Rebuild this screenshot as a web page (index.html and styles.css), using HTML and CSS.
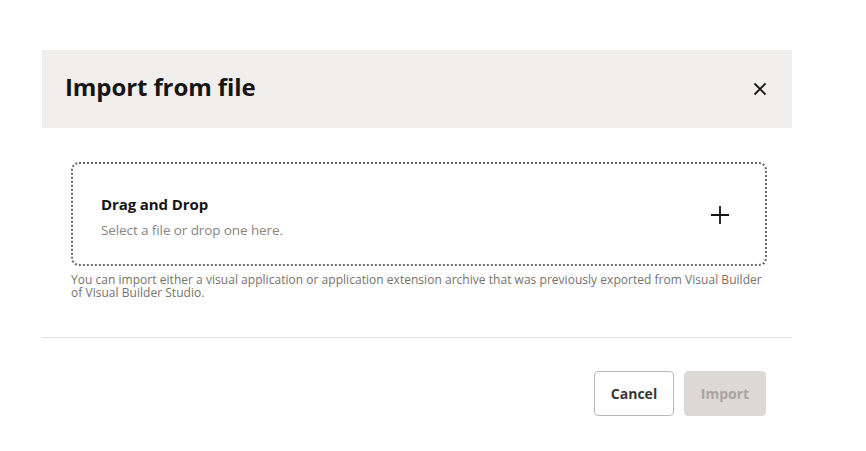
FILE: index.html
```html
<!DOCTYPE html>
<html>
<head>
<meta charset="utf-8">
<link rel="stylesheet" href="styles.css">
</head>
<body>
<div class="dialog">
  <div class="dialog-header">
    <h1 class="title">Import from file</h1>
    <button class="close" aria-label="Close">
      <svg width="14" height="14" viewBox="0 0 14 14"><path d="M1.5 1.5 L12.5 12.5 M12.5 1.5 L1.5 12.5" stroke="#161513" stroke-width="1.8" fill="none"/></svg>
    </button>
  </div>
  <div class="dialog-body">
    <div class="dropzone">
      <div class="dz-text">
        <div class="dz-title">Drag and Drop</div>
        <div class="dz-sub">Select a file or drop one here.</div>
      </div>
      <svg class="plus" width="20" height="20" viewBox="0 0 20 20"><path d="M10 1 V19 M1 10 H19" stroke="#161513" stroke-width="1.8" fill="none"/></svg>
    </div>
    <p class="help">You can import either a visual application or application extension archive that was previously exported from Visual Builder of Visual Builder Studio.</p>
  </div>
  <div class="dialog-footer">
    <button class="btn btn-cancel">Cancel</button>
    <button class="btn btn-import" disabled>Import</button>
  </div>
</div>
</body>
</html>
```
FILE: styles.css
```css
html, body {
  margin: 0;
  padding: 0;
  background: #ffffff;
}
body {
  font-family: "Open Sans", "Noto Sans", sans-serif;
  color: #161513;
}
.dialog {
  width: 750px;
  margin: 50px 0 0 42px;
}
.dialog-header {
  height: 78px;
  background: #f1efed;
  display: flex;
  align-items: center;
  justify-content: space-between;
  padding: 0 22px 0 23px;
}
.title {
  margin: 0;
  font-size: 24px;
  font-weight: 700;
  letter-spacing: -0.1px;
  color: #161513;
  padding-bottom: 6px;
}
.close {
  border: 0;
  background: transparent;
  padding: 0;
  width: 30px;
  height: 30px;
  display: flex;
  align-items: center;
  justify-content: center;
  margin-right: -5px;
}
.dialog-body {
  padding: 34px 25px 38px 29px;
  border-bottom: 1px solid #e4dfdb;
}
.dropzone {
  height: 104px;
  box-sizing: border-box;
  border: 2px dotted #6d6966;
  border-radius: 8px;
  display: flex;
  align-items: center;
  justify-content: space-between;
  padding: 0 35px 0 28px;
}
.dz-text {
  padding-top: 4px;
}
.dz-title {
  font-size: 15px;
  font-weight: 700;
  color: #161513;
  line-height: 20px;
  letter-spacing: -0.1px;
}
.dz-sub {
  font-size: 13.5px;
  color: #8a8682;
  line-height: 18px;
  margin-top: 7px;
  letter-spacing: -0.1px;
}
.plus {
  margin-top: 2px;
}
.help {
  margin: 7px 0 0 0;
  font-size: 12px;
  line-height: 13px;
  color: #77726e;
  letter-spacing: 0.03px;
}
.dialog-footer {
  display: flex;
  justify-content: flex-end;
  gap: 10px;
  padding: 33px 26px 0 0;
}
.btn {
  height: 45px;
  border-radius: 4px;
  font-family: "Open Sans", "Noto Sans", sans-serif;
  font-size: 14px;
  font-weight: 700;
  padding: 0;
}
.btn-cancel {
  width: 80px;
  background: #ffffff;
  border: 1px solid #bdb8b4;
  color: #3a3632;
}
.btn-import {
  width: 82px;
  background: #dcd8d4;
  border: 1px solid #dcd8d4;
  color: #a9a4a0;
}
```
